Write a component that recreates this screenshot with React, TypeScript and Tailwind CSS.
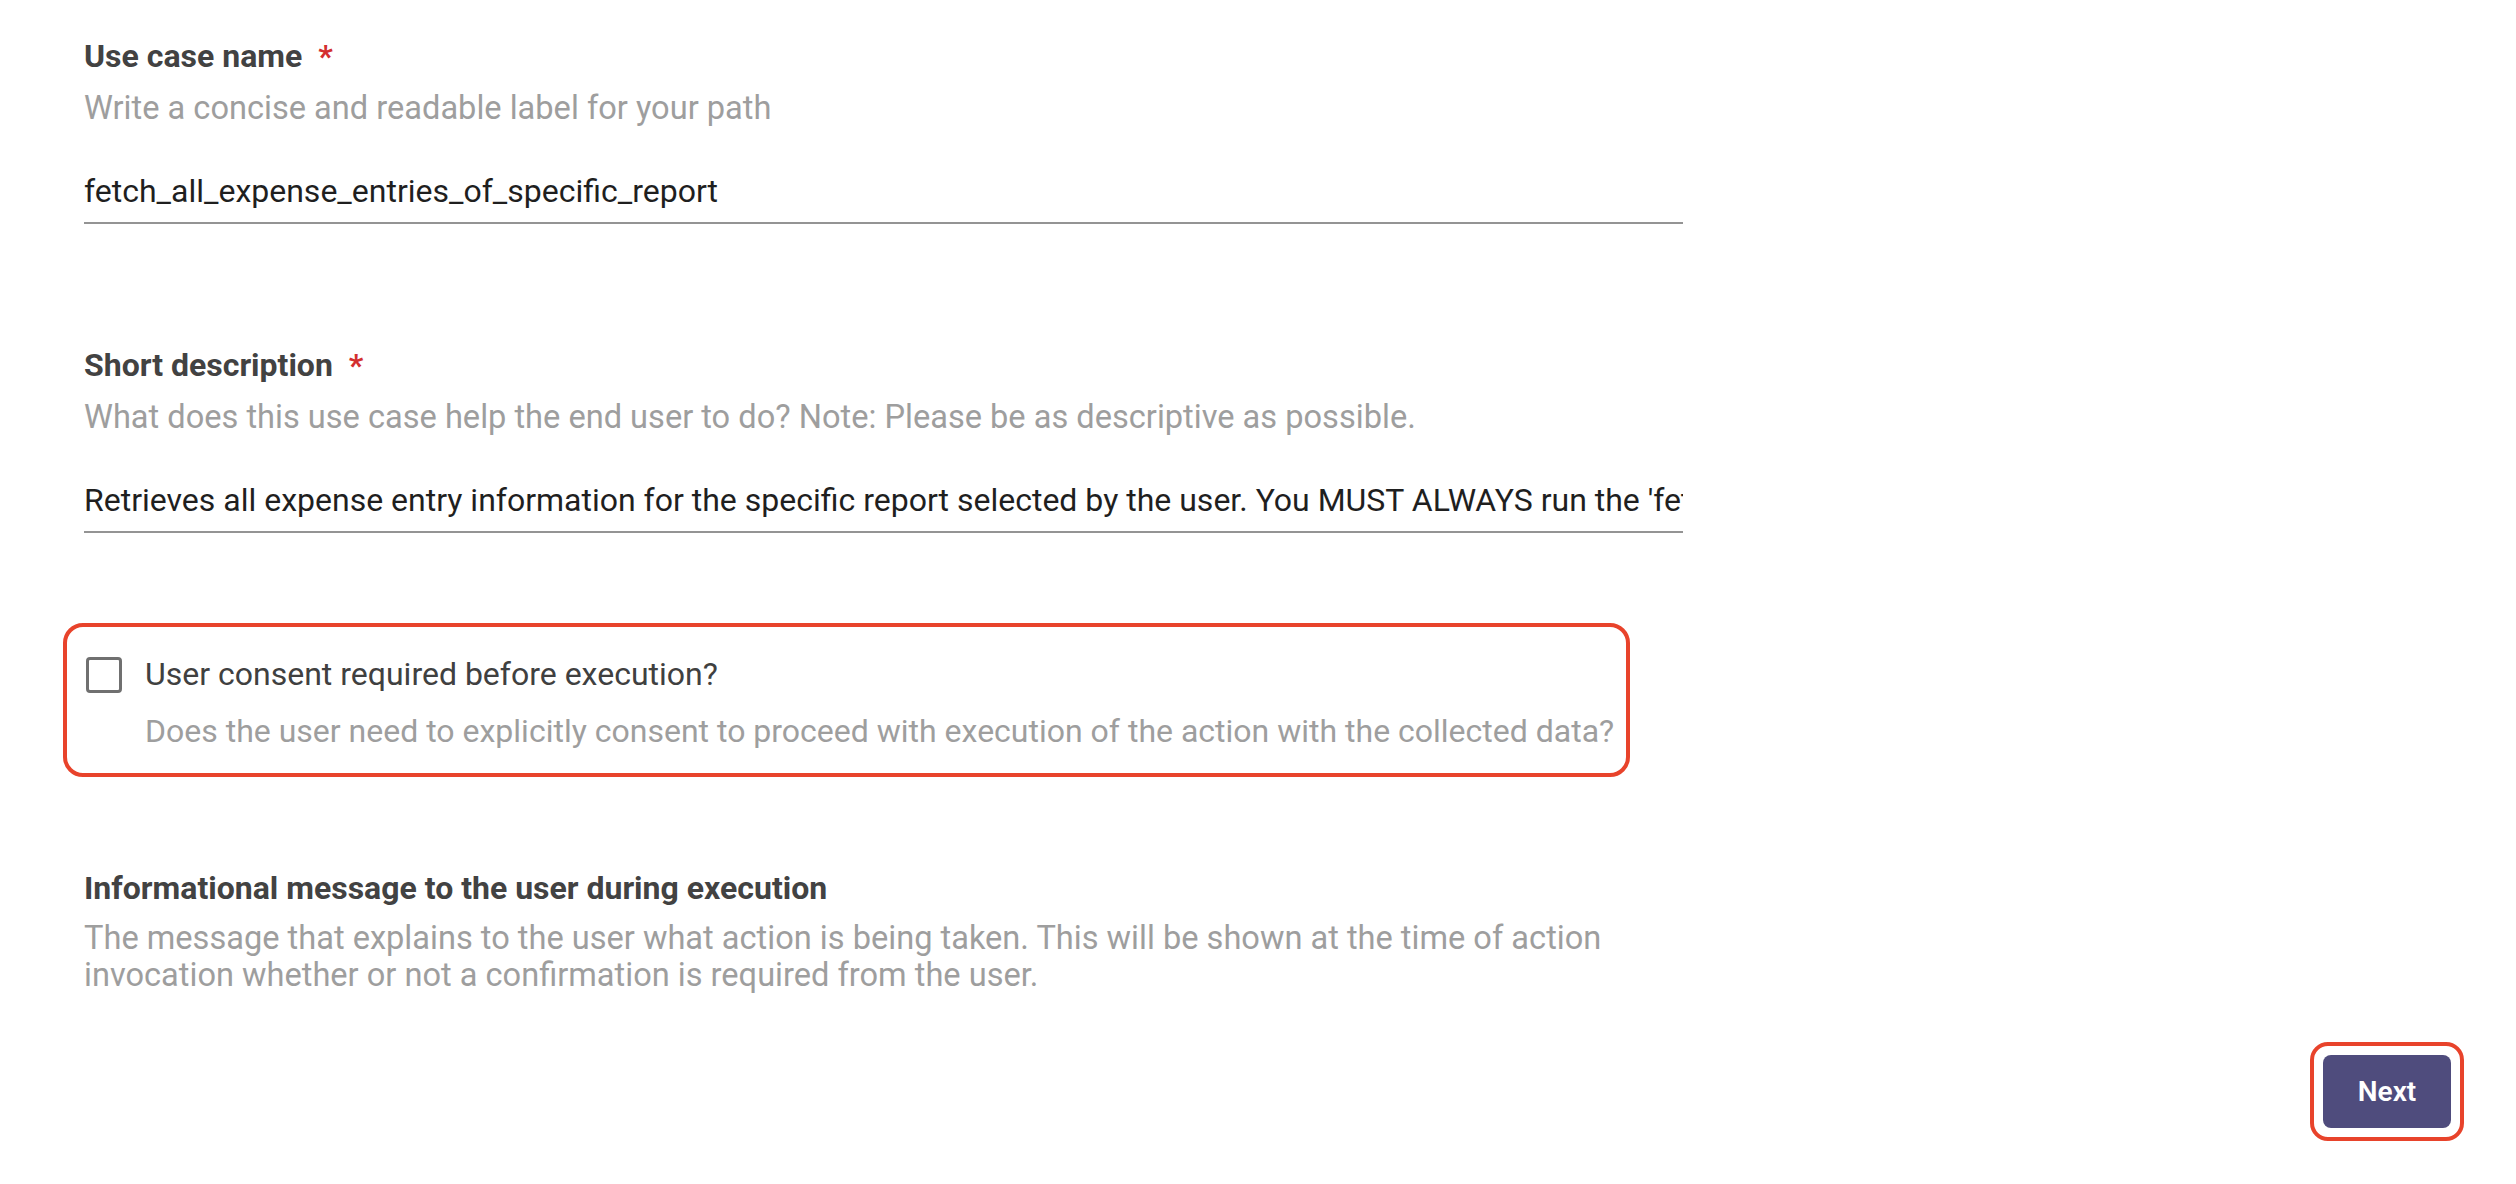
import React from "react";

function FieldLabel({ text, required }: { text: string; required?: boolean }) {
  return (
    <div className="flex items-baseline text-[32px] leading-[32px] font-bold text-[#424242]">
      <span>{text}</span>
      {required && <span className="ml-[16px] text-[#d32f2f]">*</span>}
    </div>
  );
}

function Help({ children }: { children: React.ReactNode }) {
  return <div className="text-[32.6px] leading-[37px] text-[#9e9e9e]">{children}</div>;
}

function TextInput({ value }: { value: string }) {
  return (
    <input
      readOnly
      value={value}
      className="block w-full h-[54px] border-0 border-b-2 border-[#949494] bg-transparent p-0 pb-[10px] text-[32px] text-[#1f1f1f] font-['Roboto'] outline-none"
    />
  );
}

export default function App() {
  return (
    <div className="w-[2516px] h-[1184px] bg-white font-['Roboto','Liberation_Sans',sans-serif] flex flex-col overflow-hidden">
      <div className="pl-[84px] pt-[40px] w-[1683px]">
        {/* Use case name */}
        <div>
          <FieldLabel text="Use case name" required />
          <div className="mt-[18px]">
            <Help>Write a concise and readable label for your path</Help>
          </div>
          <div className="mt-[43px]">
            <TextInput value="fetch_all_expense_entries_of_specific_report" />
          </div>
        </div>

        {/* Short description */}
        <div className="mt-[125px]">
          <FieldLabel text="Short description" required />
          <div className="mt-[18px]">
            <Help>What does this use case help the end user to do? Note: Please be as descriptive as possible.</Help>
          </div>
          <div className="mt-[43px]">
            <TextInput value="Retrieves all expense entry information for the specific report selected by the user. You MUST ALWAYS run the 'fetch_all_expense_reports' use case before this one." />
          </div>
        </div>

        {/* Consent checkbox */}
        <div className="mt-[90px] -ml-[21px] w-[1567px] border-4 border-[#e8432b] rounded-[20px] pt-[29px] pb-[23px] pl-[19px]">
          <div className="flex items-center">
            <div className="w-[36px] h-[36px] border-[3px] border-[#707070] rounded-[4px] shrink-0" />
            <div className="ml-[23px] text-[32px] leading-[37px] text-[#404040]">
              User consent required before execution?
            </div>
          </div>
          <div className="mt-[20px] ml-[59px] text-[32px] leading-[37px] text-[#9e9e9e]">
            Does the user need to explicitly consent to proceed with execution of the action with the collected data?
          </div>
        </div>

        {/* Informational message */}
        <div className="mt-[95px]">
          <FieldLabel text="Informational message to the user during execution" />
          <div className="mt-[16px]">
            <Help>
              The message that explains to the user what action is being taken. This will be shown at the time of action
              invocation whether or not a confirmation is required from the user.
            </Help>
          </div>
        </div>
      </div>

      <div className="mt-[48px] flex justify-end pr-[52px]">
        <div className="border-4 border-[#e8432b] rounded-[18px] p-[9px]">
          <button className="w-[128px] h-[73px] rounded-[8px] bg-[#4f4c7d] text-white text-[28px] font-semibold flex items-center justify-center">
            Next
          </button>
        </div>
      </div>
    </div>
  );
}
